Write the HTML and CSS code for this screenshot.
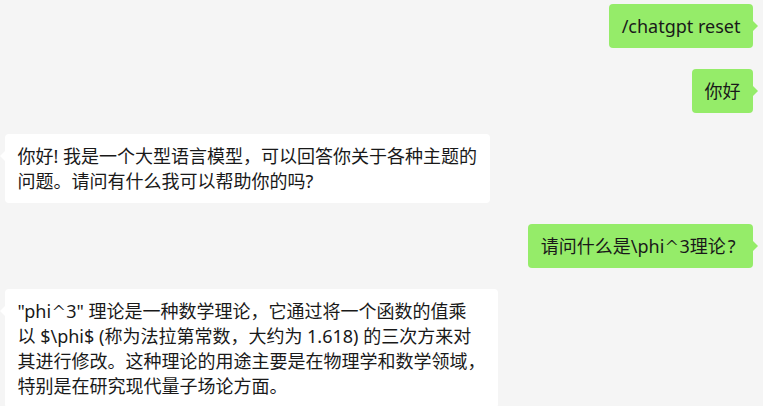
FILE: index.html
```html
<!DOCTYPE html>
<html lang="zh-CN">
<head>
<meta charset="utf-8">
<title>Chat</title>
<link rel="stylesheet" href="styles.css">
</head>
<body>
<div class="chat">
  <div class="row row-right">
    <div class="bubble bubble-me">/chatgpt reset</div>
  </div>
  <div class="row row-right">
    <div class="bubble bubble-me">你好</div>
  </div>
  <div class="row row-left">
    <div class="bubble bubble-bot">你好! 我是一个大型语言模型，可以回答你关于各种主题的<br>问题。请问有什么我可以帮助你的吗?</div>
  </div>
  <div class="row row-right">
    <div class="bubble bubble-me">请问什么是\phi<span class="caret">^</span>3理论<span class="qmark">?</span></div>
  </div>
  <div class="row row-left">
    <div class="bubble bubble-bot">"phi<span class="caret">^</span>3" 理论是一种数学理论，它通过将一个函数的值乘<br>以 $\phi$ (称为法拉第常数，大约为 1.618) 的三次方来对<br>其进行修改。这种理论的用途主要是在物理学和数学领域，<br>特别是在研究现代量子场论方面。</div>
  </div>
</div>
</body>
</html>
```

FILE: styles.css
```css
html, body {
  margin: 0;
  padding: 0;
  background: #f5f5f5;
}

body {
  width: 763px;
  height: 406px;
  overflow: hidden;
  font-family: "Noto Sans", "Noto Sans CJK SC", sans-serif;
  color: #191919;
}

.chat {
  display: flex;
  flex-direction: column;
  gap: 21px;
  padding: 4px 10px 0 5px;
}

.row {
  display: flex;
}

.row-right {
  justify-content: flex-end;
}

.row-left {
  justify-content: flex-start;
}

.bubble {
  position: relative;
  font-size: 18px;
  line-height: 25px;
  padding: 9.5px 12.5px;
  border-radius: 4px;
  white-space: nowrap;
}

.caret {
  font-family: "DejaVu Sans", sans-serif;
  font-weight: 300;
}

.qmark {
  padding-left: 2px;
  padding-right: 5px;
}

.bubble-me {
  background: #95ec69;
}

.bubble-bot {
  background: #ffffff;
}

.bubble::after {
  content: "";
  position: absolute;
  top: 17px;
  width: 0;
  height: 0;
  border-top: 5px solid transparent;
  border-bottom: 5px solid transparent;
}

.bubble-me::after {
  right: -5px;
  border-left: 5px solid #95ec69;
}

.bubble-bot::after {
  left: -5px;
  border-right: 5px solid #ffffff;
}
```
